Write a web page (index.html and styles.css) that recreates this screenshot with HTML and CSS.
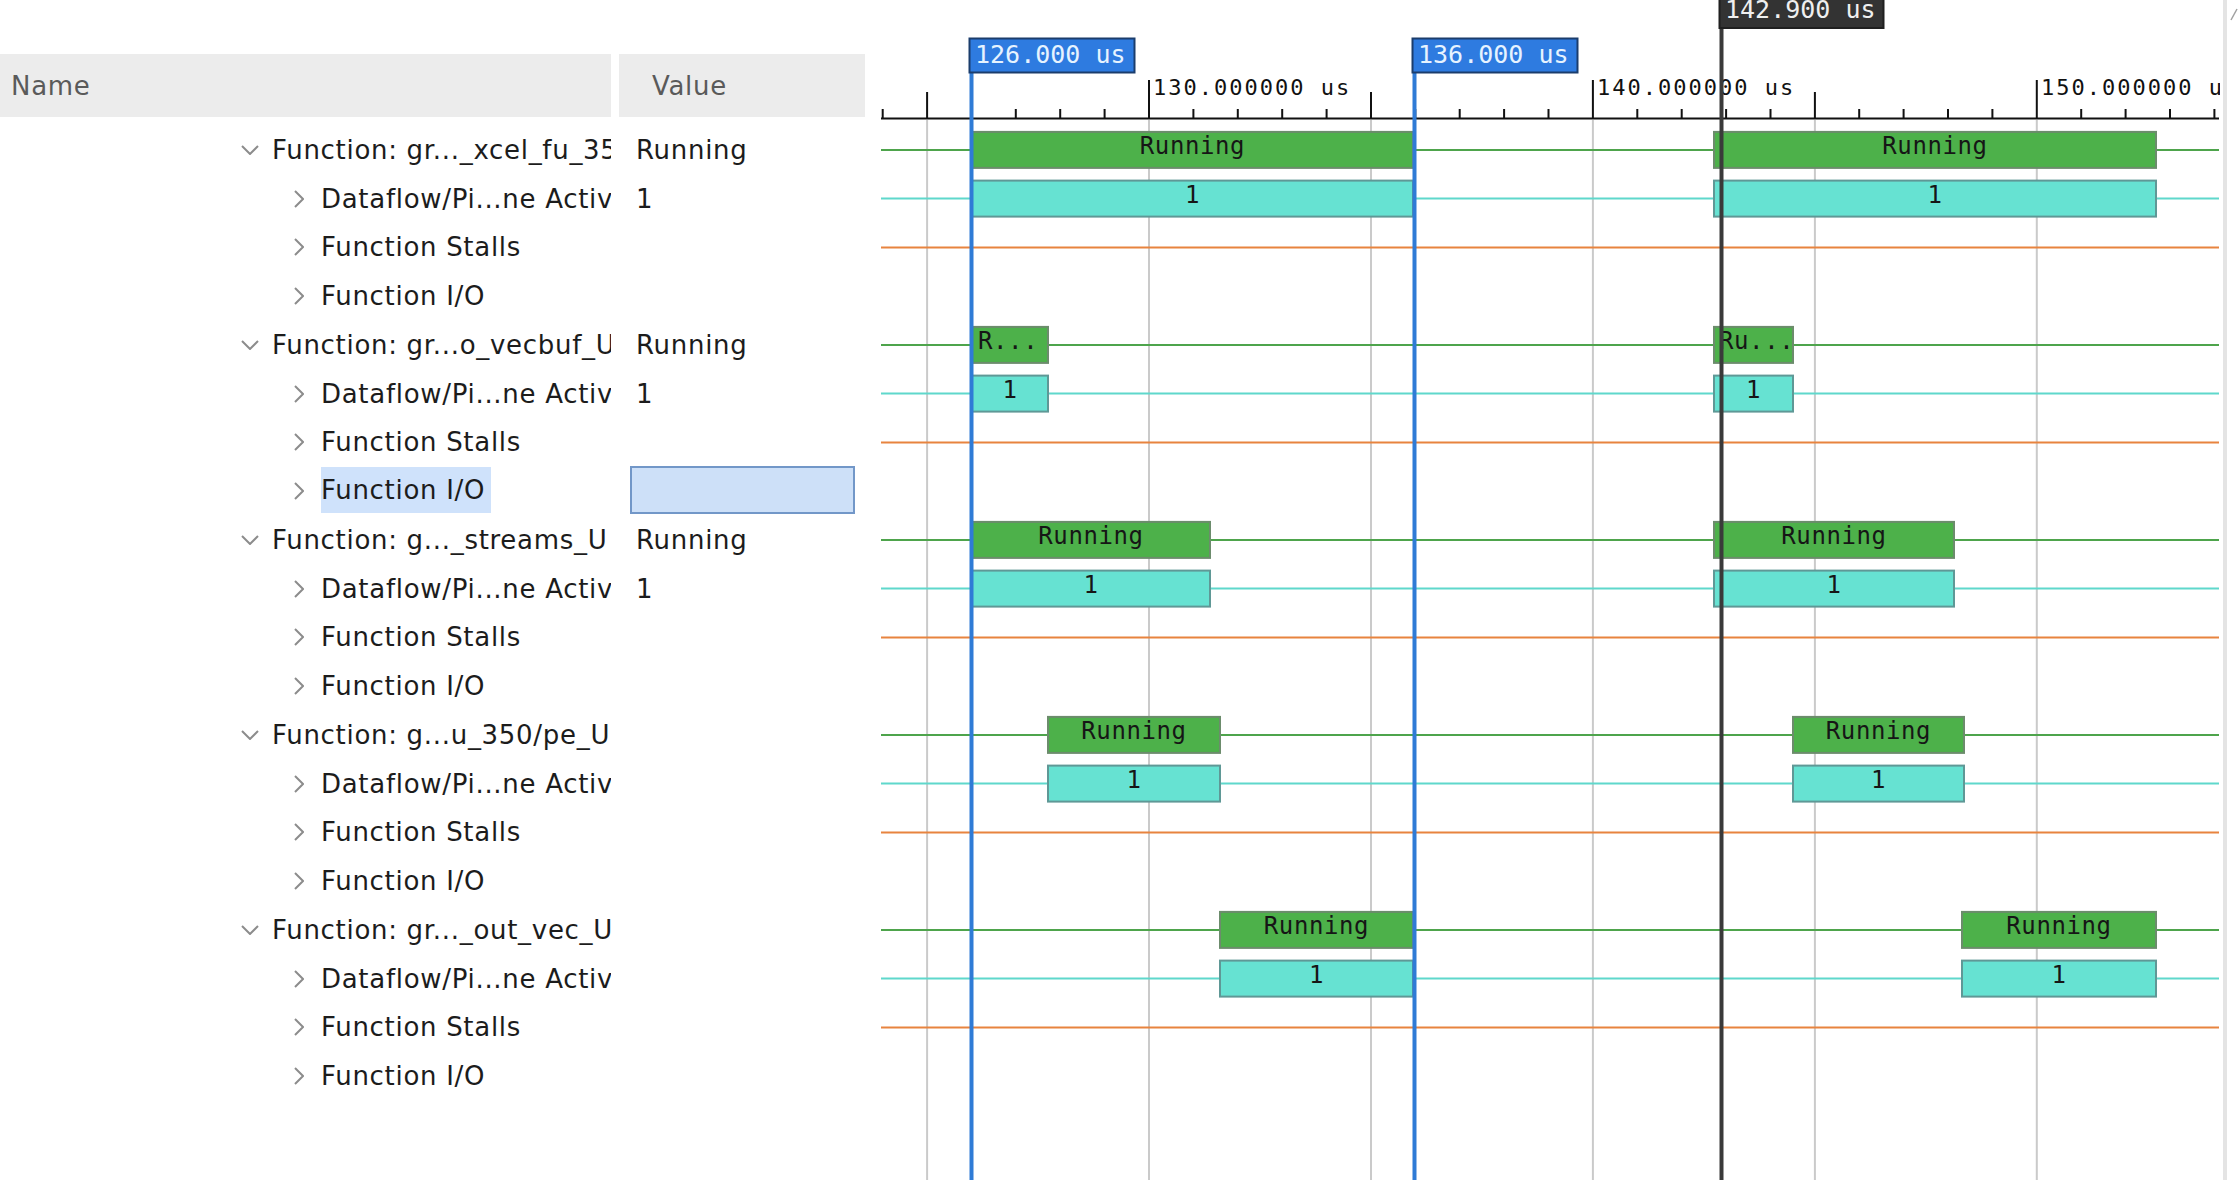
FILE: index.html
```html
<!DOCTYPE html>
<html>
<head>
<meta charset="utf-8">
<title>Waveform</title>
<link rel="stylesheet" href="styles.css">
</head>
<body>
<div class="app">
  <div class="tree">
    <div class="thead">
      <div class="th name-h">Name</div>
      <div class="th value-h">Value</div>
    </div>
    <div class="rows">
      <div class="row group"><div class="name"><span class="tw"><svg class="chev" width="18" height="10" viewBox="0 0 18 10"><polyline points="1,1 9,9 17,1"/></svg></span><span class="label">Function: gr..._xcel_fu_35</span></div><div class="value">Running</div></div>
      <div class="row child"><div class="name"><span class="tw"><svg class="chev" width="10" height="18" viewBox="0 0 10 18"><polyline points="1,1 9,9 1,17"/></svg></span><span class="label">Dataflow/Pi...ne Activ</span></div><div class="value">1</div></div>
      <div class="row child"><div class="name"><span class="tw"><svg class="chev" width="10" height="18" viewBox="0 0 10 18"><polyline points="1,1 9,9 1,17"/></svg></span><span class="label">Function Stalls</span></div><div class="value"></div></div>
      <div class="row child"><div class="name"><span class="tw"><svg class="chev" width="10" height="18" viewBox="0 0 10 18"><polyline points="1,1 9,9 1,17"/></svg></span><span class="label">Function I/O</span></div><div class="value"></div></div>

      <div class="row group"><div class="name"><span class="tw"><svg class="chev" width="18" height="10" viewBox="0 0 18 10"><polyline points="1,1 9,9 17,1"/></svg></span><span class="label">Function: gr...o_vecbuf_U</span></div><div class="value">Running</div></div>
      <div class="row child"><div class="name"><span class="tw"><svg class="chev" width="10" height="18" viewBox="0 0 10 18"><polyline points="1,1 9,9 1,17"/></svg></span><span class="label">Dataflow/Pi...ne Activ</span></div><div class="value">1</div></div>
      <div class="row child"><div class="name"><span class="tw"><svg class="chev" width="10" height="18" viewBox="0 0 10 18"><polyline points="1,1 9,9 1,17"/></svg></span><span class="label">Function Stalls</span></div><div class="value"></div></div>
      <div class="row child"><div class="name"><span class="tw"><svg class="chev" width="10" height="18" viewBox="0 0 10 18"><polyline points="1,1 9,9 1,17"/></svg></span><span class="label sel">Function I/O</span></div><div class="value editing"><div class="editbox"></div></div></div>

      <div class="row group"><div class="name"><span class="tw"><svg class="chev" width="18" height="10" viewBox="0 0 18 10"><polyline points="1,1 9,9 17,1"/></svg></span><span class="label">Function: g..._streams_U</span></div><div class="value">Running</div></div>
      <div class="row child"><div class="name"><span class="tw"><svg class="chev" width="10" height="18" viewBox="0 0 10 18"><polyline points="1,1 9,9 1,17"/></svg></span><span class="label">Dataflow/Pi...ne Activ</span></div><div class="value">1</div></div>
      <div class="row child"><div class="name"><span class="tw"><svg class="chev" width="10" height="18" viewBox="0 0 10 18"><polyline points="1,1 9,9 1,17"/></svg></span><span class="label">Function Stalls</span></div><div class="value"></div></div>
      <div class="row child"><div class="name"><span class="tw"><svg class="chev" width="10" height="18" viewBox="0 0 10 18"><polyline points="1,1 9,9 1,17"/></svg></span><span class="label">Function I/O</span></div><div class="value"></div></div>

      <div class="row group"><div class="name"><span class="tw"><svg class="chev" width="18" height="10" viewBox="0 0 18 10"><polyline points="1,1 9,9 17,1"/></svg></span><span class="label">Function: g...u_350/pe_U</span></div><div class="value"></div></div>
      <div class="row child"><div class="name"><span class="tw"><svg class="chev" width="10" height="18" viewBox="0 0 10 18"><polyline points="1,1 9,9 1,17"/></svg></span><span class="label">Dataflow/Pi...ne Activ</span></div><div class="value"></div></div>
      <div class="row child"><div class="name"><span class="tw"><svg class="chev" width="10" height="18" viewBox="0 0 10 18"><polyline points="1,1 9,9 1,17"/></svg></span><span class="label">Function Stalls</span></div><div class="value"></div></div>
      <div class="row child"><div class="name"><span class="tw"><svg class="chev" width="10" height="18" viewBox="0 0 10 18"><polyline points="1,1 9,9 1,17"/></svg></span><span class="label">Function I/O</span></div><div class="value"></div></div>

      <div class="row group"><div class="name"><span class="tw"><svg class="chev" width="18" height="10" viewBox="0 0 18 10"><polyline points="1,1 9,9 17,1"/></svg></span><span class="label">Function: gr..._out_vec_U</span></div><div class="value"></div></div>
      <div class="row child"><div class="name"><span class="tw"><svg class="chev" width="10" height="18" viewBox="0 0 10 18"><polyline points="1,1 9,9 1,17"/></svg></span><span class="label">Dataflow/Pi...ne Activ</span></div><div class="value"></div></div>
      <div class="row child"><div class="name"><span class="tw"><svg class="chev" width="10" height="18" viewBox="0 0 10 18"><polyline points="1,1 9,9 1,17"/></svg></span><span class="label">Function Stalls</span></div><div class="value"></div></div>
      <div class="row child"><div class="name"><span class="tw"><svg class="chev" width="10" height="18" viewBox="0 0 10 18"><polyline points="1,1 9,9 1,17"/></svg></span><span class="label">Function I/O</span></div><div class="value"></div></div>
    </div>
  </div>

  <div class="wave">
    <svg class="wave-svg" width="1350" height="1180" viewBox="870 0 1350 1180">
      <!-- grid -->
      <path class="grid" d="M927.1 120V1180M1149 120V1180M1371 120V1180M1592.9 120V1180M1814.9 120V1180M2036.8 120V1180"/>
      <!-- axis -->
      <path class="axis" d="M881 118.5H2219"/>
      <path class="tick" d="M882.7 109V118M971.4 109V118M1015.8 109V118M1060.2 109V118M1104.6 109V118M1193.4 109V118M1237.8 109V118M1282.2 109V118M1326.6 109V118M1415.3 109V118M1459.7 109V118M1504.1 109V118M1548.5 109V118M1637.3 109V118M1681.7 109V118M1726.1 109V118M1770.5 109V118M1859.2 109V118M1903.6 109V118M1948 109V118M1992.4 109V118M2081.2 109V118M2125.6 109V118M2170 109V118M2214.4 109V118"/>
      <path class="tick" d="M927.1 92V118M1371 92V118M1814.9 92V118"/>
      <path class="tick" d="M1149 80V118M1592.9 80V118M2036.8 80V118"/>
      <text class="tick-label" x="1153" y="95">130.000000 us</text>
      <text class="tick-label" x="1597" y="95">140.000000 us</text>
      <text class="tick-label" x="2041" y="95">150.000000 us</text>

      <!-- signal lines -->
      <path class="sig-green" d="M881 149.9H2219M881 344.9H2219M881 539.9H2219M881 734.9H2219M881 929.9H2219"/>
      <path class="sig-cyan" d="M881 198.6H2219M881 393.6H2219M881 588.6H2219M881 783.6H2219M881 978.6H2219"/>
      <path class="sig-orange" d="M881 247.4H2219M881 442.4H2219M881 637.4H2219M881 832.4H2219M881 1027.4H2219"/>

      <!-- group 1 -->
      <rect class="bar-green" x="972" y="131.9" width="441" height="36"/>
      <rect class="bar-green" x="1714" y="131.9" width="442" height="36"/>
      <rect class="bar-cyan" x="972" y="180.6" width="441" height="36"/>
      <rect class="bar-cyan" x="1714" y="180.6" width="442" height="36"/>
      <text class="bar-text mid" x="1192.5" y="153.9">Running</text>
      <text class="bar-text mid" x="1935" y="153.9">Running</text>
      <text class="bar-text mid" x="1192.5" y="202.6">1</text>
      <text class="bar-text mid" x="1935" y="202.6">1</text>

      <!-- group 2 -->
      <rect class="bar-green" x="972" y="326.9" width="76" height="36"/>
      <rect class="bar-green" x="1714" y="326.9" width="79" height="36"/>
      <rect class="bar-cyan" x="972" y="375.6" width="76" height="36"/>
      <rect class="bar-cyan" x="1714" y="375.6" width="79" height="36"/>
      <text class="bar-text" x="978" y="348.9">R...</text>
      <text class="bar-text" x="1719" y="348.9">Ru...</text>
      <text class="bar-text mid" x="1010" y="397.6">1</text>
      <text class="bar-text mid" x="1753.5" y="397.6">1</text>

      <!-- group 3 -->
      <rect class="bar-green" x="972" y="521.9" width="238" height="36"/>
      <rect class="bar-green" x="1714" y="521.9" width="240" height="36"/>
      <rect class="bar-cyan" x="972" y="570.6" width="238" height="36"/>
      <rect class="bar-cyan" x="1714" y="570.6" width="240" height="36"/>
      <text class="bar-text mid" x="1091" y="543.9">Running</text>
      <text class="bar-text mid" x="1834" y="543.9">Running</text>
      <text class="bar-text mid" x="1091" y="592.6">1</text>
      <text class="bar-text mid" x="1834" y="592.6">1</text>

      <!-- group 4 -->
      <rect class="bar-green" x="1048" y="716.9" width="172" height="36"/>
      <rect class="bar-green" x="1793" y="716.9" width="171" height="36"/>
      <rect class="bar-cyan" x="1048" y="765.6" width="172" height="36"/>
      <rect class="bar-cyan" x="1793" y="765.6" width="171" height="36"/>
      <text class="bar-text mid" x="1134" y="738.9">Running</text>
      <text class="bar-text mid" x="1878.5" y="738.9">Running</text>
      <text class="bar-text mid" x="1134" y="787.6">1</text>
      <text class="bar-text mid" x="1878.5" y="787.6">1</text>

      <!-- group 5 -->
      <rect class="bar-green" x="1220" y="911.9" width="193" height="36"/>
      <rect class="bar-green" x="1962" y="911.9" width="194" height="36"/>
      <rect class="bar-cyan" x="1220" y="960.6" width="193" height="36"/>
      <rect class="bar-cyan" x="1962" y="960.6" width="194" height="36"/>
      <text class="bar-text mid" x="1316.5" y="933.9">Running</text>
      <text class="bar-text mid" x="2059" y="933.9">Running</text>
      <text class="bar-text mid" x="1316.5" y="982.6">1</text>
      <text class="bar-text mid" x="2059" y="982.6">1</text>

      <!-- cursors -->
      <rect class="cur-blue" x="969.5" y="72" width="4" height="1108"/>
      <rect class="cur-blue" x="1412.5" y="72" width="4" height="1108"/>
      <rect class="cur-black" x="1719.5" y="28" width="4" height="1152"/>

      <rect class="lab-blue" x="969.5" y="38.5" width="165" height="34"/>
      <text class="cur-text" x="975" y="63">126.000 us</text>
      <rect class="lab-blue" x="1412.5" y="38.5" width="165" height="34"/>
      <text class="cur-text" x="1418" y="63">136.000 us</text>
      <rect class="lab-black" x="1719.5" y="-10" width="164" height="38"/>
      <text class="cur-text dark" x="1725" y="18">142.900 us</text>
    </svg>
  </div>

  <div class="scroll">
    <div class="track"></div>
    <svg class="arrow" width="15" height="24" viewBox="0 0 15 24"><polyline points="8,20 14,9"/></svg>
  </div>
</div>
</body>
</html>
```

FILE: styles.css
```css
html, body {
  margin: 0;
  padding: 0;
  background: #ffffff;
}

body {
  font-family: "DejaVu Sans", "Liberation Sans", sans-serif;
}

.app {
  display: flex;
  width: 2238px;
  height: 1180px;
  overflow: hidden;
}

/* ---------- tree ---------- */
.tree {
  width: 870px;
  flex: none;
}

.thead {
  display: flex;
  gap: 8px;
  margin-top: 54px;
  height: 63px;
}

.th {
  display: flex;
  align-items: center;
  box-sizing: border-box;
  background: #ececec;
  color: #5a5a5a;
  font-size: 26px;
  letter-spacing: 0.7px;
}

.name-h {
  width: 611px;
  padding-left: 11px;
}

.value-h {
  width: 246px;
  padding-left: 33px;
}

.rows {
  padding-top: 8.5px;
}

.row {
  display: flex;
  align-items: center;
  gap: 8px;
  height: 48.75px;
  font-size: 26px;
  letter-spacing: 0.7px;
  color: #1c1c1c;
}

.name {
  display: flex;
  align-items: center;
  box-sizing: border-box;
  width: 611px;
  height: 100%;
  overflow: hidden;
  white-space: nowrap;
  flex: none;
}

.group .name {
  padding-left: 236px;
}

.child .name {
  padding-left: 285px;
}

.tw {
  display: flex;
  justify-content: center;
  align-items: center;
  width: 28px;
  flex: none;
  margin-right: 8px;
}

.chev polyline {
  fill: none;
  stroke: #8c8c8c;
  stroke-width: 2;
}

.label {
  flex: none;
}

.label.sel {
  align-self: flex-start;
  height: 46px;
  line-height: 46px;
  padding-right: 6px;
  background: #cfe2fb;
}

.value {
  box-sizing: border-box;
  width: 246px;
  padding-left: 17px;
  white-space: nowrap;
  flex: none;
}

.value.editing {
  align-self: flex-start;
  padding-left: 11px;
  padding-right: 10px;
  margin-top: -1px;
}

.editbox {
  box-sizing: border-box;
  height: 48px;
  border: 2px solid #7297c8;
  background: #cde0f8;
}

/* ---------- waveform ---------- */
.wave {
  width: 1350px;
  flex: none;
}

.wave-svg {
  display: block;
}

.grid {
  fill: none;
  stroke: #cacaca;
  stroke-width: 2;
}

.axis {
  fill: none;
  stroke: #111111;
  stroke-width: 2;
}

.tick {
  fill: none;
  stroke: #111111;
  stroke-width: 2;
}

.tick-label {
  font-family: "DejaVu Sans Mono", "Liberation Mono", monospace;
  font-size: 22px;
  letter-spacing: 2px;
  fill: #111111;
}

.sig-green {
  fill: none;
  stroke: #4ea44c;
  stroke-width: 2;
}

.sig-cyan {
  fill: none;
  stroke: #5fd8cc;
  stroke-width: 2;
}

.sig-orange {
  fill: none;
  stroke: #e8843f;
  stroke-width: 2;
}

.bar-green {
  fill: #4db14a;
  stroke: #6c8c6c;
  stroke-width: 2;
}

.bar-cyan {
  fill: #66e2d2;
  stroke: #5f9896;
  stroke-width: 2;
}

.bar-text {
  font-family: "DejaVu Sans Mono", "Liberation Mono", monospace;
  font-size: 24px;
  letter-spacing: 0.6px;
  fill: #161616;
}

.bar-text.mid {
  text-anchor: middle;
}

.cur-blue {
  fill: #2f7bd6;
}

.cur-black {
  fill: #3a3a3a;
}

.lab-blue {
  fill: #2e7be0;
  stroke: #1b3d6c;
  stroke-width: 2;
}

.lab-black {
  fill: #333333;
  stroke: #1f1f1f;
  stroke-width: 2;
}

.cur-text {
  font-family: "DejaVu Sans Mono", "Liberation Mono", monospace;
  font-size: 25px;
  fill: #e6f3ff;
}

.cur-text.dark {
  fill: #efefef;
}

/* ---------- scrollbar ---------- */
.scroll {
  position: relative;
  width: 18px;
  flex: none;
  background: #ffffff;
}

.track {
  margin-left: 3px;
  width: 4px;
  height: 100%;
  background: #e4e4e4;
}

.arrow {
  position: absolute;
  top: 0;
  left: 3px;
}

.arrow polyline {
  fill: none;
  stroke: #a0a0a0;
  stroke-width: 1.5;
}
```
